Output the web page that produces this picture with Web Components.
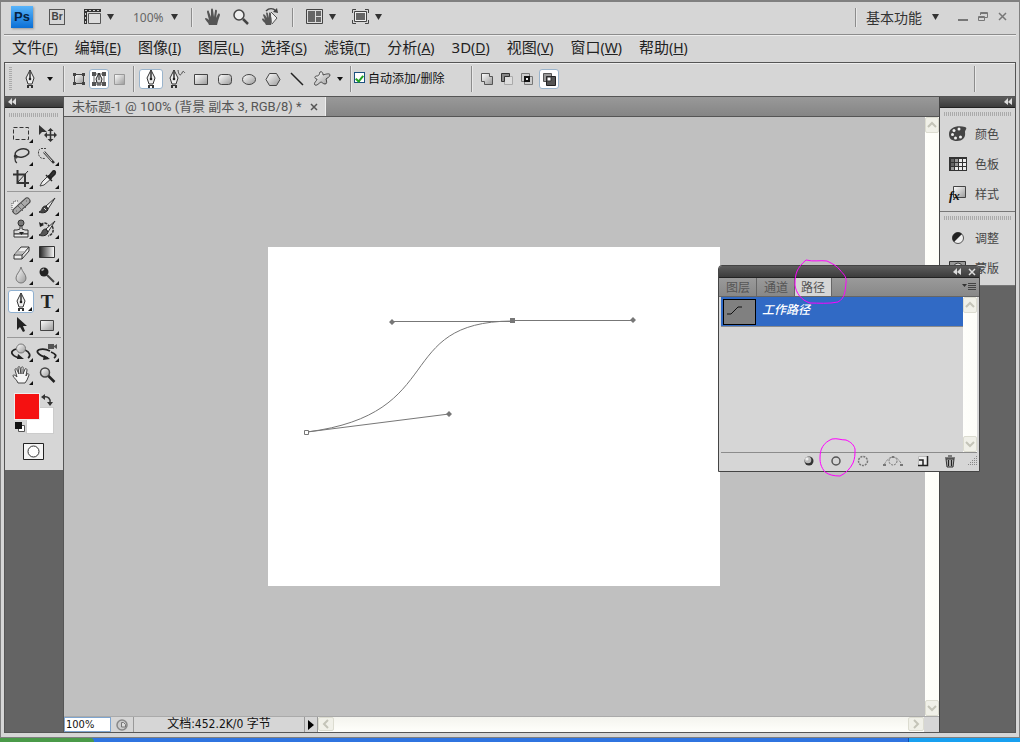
<!DOCTYPE html>
<html lang="zh-CN">
<head>
<meta charset="utf-8">
<title>未标题-1</title>
<style>
  body {
    margin: 0;
    font-family: "Noto Sans", "Noto Sans CJK SC", sans-serif;
    font-size: 12px;
    color: #333;
  }
</style>
</head>
<body>
<ps-window>
  <app-bar slot="top"></app-bar>
  <menu-bar slot="top">
    <menu-item key="F">文件</menu-item>
    <menu-item key="E">编辑</menu-item>
    <menu-item key="I">图像</menu-item>
    <menu-item key="L">图层</menu-item>
    <menu-item key="S">选择</menu-item>
    <menu-item key="T">滤镜</menu-item>
    <menu-item key="A">分析</menu-item>
    <menu-item key="D">3D</menu-item>
    <menu-item key="V">视图</menu-item>
    <menu-item key="W">窗口</menu-item>
    <menu-item key="H">帮助</menu-item>
  </menu-bar>
  <options-bar slot="top"></options-bar>
  <tool-box></tool-box>
  <doc-window></doc-window>
  <side-dock>
    <dock-group>
      <dock-item icon="palette">颜色</dock-item>
      <dock-item icon="swatches">色板</dock-item>
      <dock-item icon="styles">样式</dock-item>
    </dock-group>
    <dock-group>
      <dock-item icon="adjust">调整</dock-item>
      <dock-item icon="mask">蒙版</dock-item>
    </dock-group>
  </side-dock>
  <paths-panel slot="float"></paths-panel>
</ps-window>

<script>
// name: [width, height, svg markup]
const pen = `<path d="M10 1v9M10 1 6 9l2 6h4l2-6z" fill="#eee" stroke="#333"/><path d="M10 3v6" stroke="#333"/><circle cx="10" cy="10" r="1.3" fill="#222"/><path d="M7 16h6v3h-2v-2H9v2H7z" fill="#333"/>`;
const ICONS = {
  film: [20, 18, `<path d="M1 1h17v3H4v12H1z" fill="#333"/><path d="M2 2.500h15M2.500 5v11" stroke="#ccc" stroke-dasharray="2 2"/><path d="M5.500 5.500h12v10h-12z" fill="#ddd" stroke="#555"/>`],
  handsolid: [18, 18, `<path d="M5 17c-1-3-3-4-4-6 0-2 2-1 4 1L3 4c0-2 2-2 2 0l2 5V2c0-2 2-2 2 0l1 7 1-6c0-2 2-1 2 0l-1 7 2-4c1-1 2 0 2 1l-2 6-1 4z" fill="#555"/>`],
  lens: [18, 18, `<circle cx="7" cy="7" r="5" fill="#eee" stroke="#444" stroke-width="1.500"/><path d="m11 11 5 5" stroke="#444" stroke-width="2.500"/>`],
  rotate: [20, 20, `<path d="M6 18c-1-3-4-4-4-6 1-1 2 0 3 1L3 8c0-1 1-1 2 0l2 3-1-5c1-1 2 0 2 1l1 4V6c1-1 2 0 2 1v4l2-3c1 0 1 1 1 2l-2 5-1 3z" fill="#555"/><path d="m11 5 6 6-5 6" fill="#eee" stroke="#555"/><path d="M6 4c3-3 7-3 10 0" fill="none" stroke="#444" stroke-width="1.500"/><path d="m17 1 1 5-5-1z" fill="#444"/>`],
  layout: [20, 18, `<path d="M1.500 1.500h16v14h-16z" fill="#ddd" stroke="#444"/><path d="M3 3h7v11H3zM11 3h5v5h-5zM11 9h5v5h-5z" fill="#666"/>`],
  screen: [20, 18, `<path d="M1.500 5V1.500H5M14 1.500h3.500V5M17.500 12v3.500H14M5 15.500H1.500V12" fill="none" stroke="#444"/><path d="M3.500 3.500h12v10h-12z" fill="#eee" stroke="#444"/><path d="M5 5h9v7H5z" fill="#666"/>`],
  min: [12, 12, `<path d="M1 9h10" stroke="#777" stroke-width="2"/>`],
  restore: [12, 12, `<path d="M3.500 4V1.500h7v5H8M3 2.500h8" fill="none" stroke="#777"/><path d="M1.500 5.500h6v4h-6zM1 6.500h7" fill="none" stroke="#777"/>`],
  close: [12, 12, `<path d="m2 2 7 7M9 2 2 9" stroke="#777" stroke-width="1.500"/>`],
  x: [8, 8, `<path d="m1 1 6 6M7 1 1 7" stroke="currentColor" stroke-width="1.500"/>`],
  down: [8, 6, `<path d="M0 0h7L3.500 6z" fill="#333"/>`],
  downsmall: [6, 4, `<path d="M0 0h6L3 4z" fill="#111"/>`],
  collapse: [8, 8, `<path d="M4 0v7L0 4zM8 0v7L4 4z" fill="#ddd"/>`],
  pen: [20, 20, pen],
  freepen: [17, 20, `<g transform="translate(-5 0)">${pen}</g><path d="M9 1c1 7 3 5 4 3 1-3 2-1 3 0" fill="none" stroke="#444"/>`],
  shapelayer: [16, 16, `<path d="M3.500 3.500h9v9h-9z" fill="url(#g)" stroke="#444"/><path d="M2 2h3v3H2zM11 2h3v3h-3zM2 11h3v3H2zM11 11h3v3h-3z" fill="#444"/>`],
  pathmode: [16, 16, `<path d="M3 3h10v10H3z" fill="none" stroke="#666"/><path d="M1 1h4v4H1zM11 1h4v4h-4zM1 11h4v4H1zM11 11h4v4h-4z" fill="#555"/><path d="M8 2 5 8l1 4h4l1-4zM8 2v7M6 14h4" fill="#ddd" stroke="#222"/>`],
  fillpx: [16, 16, `<path d="M3.500 3.500h10v10h-10z" fill="url(#g)" stroke="#999"/>`],
  rect: [18, 16, `<path d="M2.500 3.500h13v10h-13z" fill="url(#g)" stroke="#444"/>`],
  rrect: [18, 16, `<rect x="2.500" y="3.500" width="13" height="10" rx="3" fill="url(#g)" stroke="#444"/>`],
  ellipse: [18, 16, `<ellipse cx="9" cy="8.500" rx="6.500" ry="5" fill="url(#g)" stroke="#444"/>`],
  polygon: [18, 16, `<path d="M5.500 2.500h7l3.500 6-3.500 6h-7L2 8.500z" fill="url(#g)" stroke="#444"/>`],
  line: [18, 16, `<path d="m3 2 12 12" stroke="#222" stroke-width="1.500"/>`],
  blob: [19, 18, `<path d="M8 2c2-1 3 1 3 3 3-1 7-2 7 0s-3 3-4 4c1 3 1 5-1 5s-3-2-4-2c-2 1-4 4-6 3-2-2 2-4 2-6-2 0-3-2-1-3 2 0 3 0 4-4z" fill="url(#g)" stroke="#444"/>`],
  add: [16, 16, `<path d="M2.500 2.500h8v3h3v8h-8v-3h-3z" fill="url(#g)" stroke="#555"/>`],
  sub: [16, 16, `<path d="M5.500 5.500h8v8h-8z" fill="#ddd" stroke="#aaa"/><path d="M2.500 2.500h8v3h-5v5h-3z" fill="#888" stroke="#333"/>`],
  inter: [16, 16, `<path d="M2.500 2.500h8v8h-8zM5.500 5.500h8v8h-8z" fill="#ccc" stroke="#777"/><path d="M6 6h4v4H6z" fill="#eee" stroke="#111" stroke-width="2"/>`],
  excl: [16, 16, `<path d="M2.500 2.500h8v8h-8z" fill="#999" stroke="#555"/><path d="M5.500 5.500h9v9h-9z" fill="#555" stroke="#222"/><path d="M6 6h4v4H6z" fill="#fff" stroke="#333"/>`],
  marquee: [20, 20, `<path d="M2.500 4.500h15v12h-15z" fill="none" stroke="#333" stroke-dasharray="4 2"/>`],
  move: [22, 20, `<path d="m3 2 8 7H6l-3 3z" fill="#333"/><path d="M14.500 7v10M9.500 12h10" stroke="#333" stroke-width="1.500"/><path d="m14.500 5 3 3h-6zM14.500 19l3-3h-6zM8 12l3-3v6zM21 12l-3-3v6z" fill="#333"/>`],
  lasso: [20, 20, `<ellipse cx="11" cy="7" rx="7" ry="4" transform="rotate(-12 11 7)" fill="none" stroke="#333" stroke-width="1.500"/><path d="M4 9c-2 2 2 4 2 2s-3-1-2 2c0 2 0 3 2 4" fill="none" stroke="#333" stroke-width="1.300"/>`],
  wand: [20, 20, `<path d="M9 2.500H4c-3 1-3 5-2 7 1 3 4 3 6 3" fill="none" stroke="#444" stroke-dasharray="2 1"/><path d="m7 6 10 11" stroke="#333" stroke-width="2.500"/><path d="m7 6 8 9" stroke="#ddd"/>`],
  crop: [20, 20, `<path d="M6.500 1v13H18M2 5.500h12V18" fill="none" stroke="#333" stroke-width="2"/><path d="M17 2 7 13" stroke="#333"/>`],
  dropper: [20, 20, `<path d="m3 17 2-4 7-7 3 3-8 7z" fill="#eee" stroke="#444"/><path d="m9 6 6 6M12 7l4-5c2-1 3 1 2 3l-4 4z" fill="#333" stroke="#222" stroke-width="1.500"/>`],
  heal: [22, 20, `<path d="M8 5H4v2H2v8l4 2" fill="#eee" stroke="#555" stroke-dasharray="1 1"/><path d="M6 15 17 5" stroke="#444" stroke-width="7" stroke-linecap="round"/><path d="M6 15 17 5" stroke="#aaa" stroke-width="5" stroke-linecap="round"/><path d="m8 10 5 5M11 7l5 5M6 15h1M16 5h1" stroke="#666"/>`],
  brush: [20, 20, `<path d="M18 2 9 10l2 3z" fill="#eee" stroke="#333"/><path d="M9 10c-5 0-3 5-7 6 4 2 9 0 9-3z" fill="#444" stroke="#222"/><path d="m7 12 2 2" stroke="#ddd"/>`],
  stamp: [20, 20, `<circle cx="10" cy="4" r="3" fill="#777" stroke="#333"/><path d="M9 7h2v3l3 1h3v4H3v-4h3l3-1z" fill="#ddd" stroke="#333"/><path d="M3 15h14v3H3z" fill="#eee" stroke="#333"/><path d="M8 13h5l-2.500 3z" fill="#222"/>`],
  history: [20, 20, `<path d="M18 2 9 10l2 3z" fill="#eee" stroke="#333"/><path d="M9 10c-5 0-3 5-7 6 4 2 9 0 9-3z" fill="#555" stroke="#222"/><path d="M4 6c3-4 7-1 8 1M15 7c3 5 0 9-4 10" fill="none" stroke="#333" stroke-width="1.500" stroke-dasharray="3 1"/><path d="m2 3 1 5 4-2z" fill="#222"/>`],
  eraser: [20, 20, `<path d="m3 13 7-8h8l-7 8zM3 13v4h8v-4M18 5v4l-7 8" fill="#eee" stroke="#333" stroke-linejoin="round"/><path d="m4 12 3-3h7l-3 3z" fill="#bbb"/>`],
  gradient: [20, 20, `<path d="M2.500 4.500h15v11h-15z" fill="url(#h)" stroke="#333"/>`],
  drop: [20, 20, `<path d="M10 2c1 5 5 7 5 11a5 5 0 0 1-10 0c0-4 4-6 5-11z" fill="url(#g)" stroke="#777"/>`],
  dodge: [20, 20, `<circle cx="7" cy="7" r="4.500" fill="#222"/><path d="M4.500 5.500 7 4" stroke="#aaa" stroke-width="1.500"/><path d="m10 10 7 7" stroke="#444" stroke-width="2"/>`],
  select: [20, 20, `<path d="M6 2v13l3-3 3 5 2-1-2-5h4z" fill="#222"/>`],
  orbit: [22, 20, `<path d="M6 7c-6 2-6 6 3 9M15 8c5 2 6 6 3 8" fill="none" stroke="#222" stroke-width="1.800"/><circle cx="11" cy="6.500" r="4.500" fill="url(#g)" stroke="#777"/><path d="m8 12 6 5H7z" fill="#222"/>`],
  orbitcam: [22, 20, `<path d="M14 9C8 6-1 7 2 11c2 3 6 4 10 5M15 10c5 2 6 4 3 6" fill="none" stroke="#222" stroke-width="1.800"/><path d="m8 13 6 4-7 1z" fill="#222"/><path d="M12 2h6v5h-6zM18 4l3-2v5l-3-2z" fill="#555"/>`],
  hand: [20, 20, `<path d="M7 18c-1-3-4-5-5-7 0-2 2-1 4 1L4 5c0-2 2-2 2 0l2 4-1-6c0-2 2-2 2 0l1 6V3c1-2 3-1 2 1v5l2-5c1-1 2 0 2 1l-1 6 1-2c1-1 2 0 2 1l-2 5-2 3z" fill="#f5f5f5" stroke="#444"/>`],
  zoom: [20, 20, `<circle cx="8" cy="7.500" r="4.500" fill="url(#g)" stroke="#444" stroke-width="1.500"/><path d="m11.500 11 6 6" stroke="#222" stroke-width="2.500"/>`],
  swap: [14, 12, `<path d="M4 3c4-1 7 2 6 6" fill="none" stroke="#333" stroke-width="1.500"/><path d="m5 0-4 3 4 3zM7 8h6l-3 4z" fill="#333"/>`],
  defaults: [12, 12, `<path d="M4.500 4.500h6v6h-6z" fill="#fff" stroke="#555"/><path d="M1 1h7v7H1z" fill="#111"/>`],
  quickmask: [22, 18, `<path d="M.500.500h20v16H.500z" fill="#f5f5f5" stroke="#222"/><circle cx="10.500" cy="8.500" r="5.500" fill="#fff" stroke="#333"/>`],
  palette: [20, 18, `<path d="M1 9c0-7 9-9 16-7 3 1 0 3 0 5 1 6-3 9-8 9s-8-2-8-7z" fill="#444"/><g fill="#eee"><circle cx="6" cy="5.500" r="1.500"/><circle cx="11" cy="4" r="1.500"/><circle cx="4.500" cy="9.500" r="1.500"/><circle cx="7.500" cy="13" r="1.500"/><circle cx="12.500" cy="12" r="1.500"/></g>`],
  swatches: [20, 18, `<path d="M1 2h18v14H1z" fill="#333"/><path d="M3 4h3v3H3zM3 8h3v3H3z" fill="#666"/><path d="M7 4h3v3H7zM7 8h3v3H7zM3 12h3v3H3z" fill="#999"/><path d="M11 4h3v3h-3zM11 8h3v3h-3zM15 4h3v3h-3zM15 8h3v3h-3zM7 12h3v3H7zM11 12h3v3h-3zM15 12h3v3h-3z" fill="#eee"/>`],
  styles: [20, 18, `<path d="M5.500 1.500h12v11h-12z" fill="url(#g)" stroke="#444"/><text x="1" y="15" font-family="Liberation Serif" font-style="italic" font-weight="700" font-size="13" fill="#111">fx</text>`],
  adjust: [20, 18, `<circle cx="10" cy="9" r="5.500" fill="#eee" stroke="#555"/><path d="M6 13a5.500 5.500 0 0 1 8-8z" fill="#222"/>`],
  mask: [20, 18, `<path d="M1.500 2.500h16v11h-16z" fill="#999" stroke="#333"/><circle cx="10" cy="8" r="4" fill="#ddd" stroke="#444"/>`],
  up: [12, 12, `<path d="m2 8 4-4 4 4" fill="none" stroke="#c4c4b8" stroke-width="2"/>`],
  dn: [12, 12, `<path d="m2 4 4 4 4-4" fill="none" stroke="#c4c4b8" stroke-width="2"/>`],
  lt: [12, 12, `<path d="M8 2 4 6l4 4" fill="none" stroke="#c4c4b8" stroke-width="2"/>`],
  rt: [12, 12, `<path d="m4 2 4 4-4 4" fill="none" stroke="#c4c4b8" stroke-width="2"/>`],
  play: [6, 10, `<path d="M0 0v10l6-5z" fill="#000"/>`],
  clock: [14, 14, `<circle cx="7" cy="7" r="5" fill="#ccc" stroke="#888" stroke-width="1.500"/><path d="M6.500 9V4.500h2l2 2V9z" fill="#ddd" stroke="#777"/>`],
  panelmenu: [14, 10, `<path d="M0 2h5L2.500 5z" fill="#333"/><path d="M6 1.500h8M6 3.500h8M6 5.500h8M6 7.500h8" stroke="#444"/>`],
  fillpath: [14, 14, `<circle cx="7" cy="7" r="4.500" fill="#333"/><circle cx="6" cy="6" r="3.300" fill="#bbb"/><circle cx="5" cy="5" r="1.500" fill="#eee"/>`],
  strokepath: [14, 14, `<circle cx="7" cy="7" r="4" fill="none" stroke="#555" stroke-width="1.500"/>`],
  loadsel: [14, 14, `<circle cx="7" cy="7" r="4.500" fill="none" stroke="#777" stroke-width="1.500" stroke-dasharray="2 1"/>`],
  workpath: [20, 14, `<circle cx="10" cy="7" r="4" fill="none" stroke="#777" stroke-dasharray="2 1"/><path d="M1 11c2-4 5-8 9-8s7 4 9 8" fill="none" stroke="#888" stroke-dasharray="3 1"/><path d="M0 10h3v2H0zM17 10h3v2h-3zM9 2h2v2H9z" fill="#777"/>`],
  newpath: [14, 14, `<path d="M2.500 2.500h9v9h-9z" fill="#eee" stroke="#bbb"/><path d="M11.500 2v9.500H2" stroke="#222" stroke-width="1.500"/><path d="M3 6h4v5" stroke="#222" stroke-width="1.500"/>`],
  trash: [14, 14, `<path d="M3 5h8l-1 8H4z" fill="#aaa" stroke="#333"/><path d="M2 4h10M5 2h4M5.500 6v6M8.500 6v6" stroke="#222"/>`],
  resize: [12, 12, `<path d="M10.500 1v10M8.500 3v8M6.500 5v6M4.500 7v4M2.500 9v2" stroke="#888" stroke-dasharray="1 1"/>`],
};

// Fills the shadow root with the element's styles and markup
class PsElement extends HTMLElement {
  connectedCallback() {
    if (this.shadowRoot) return;
    this.attachShadow({ mode: "open" });
    this.shadowRoot.innerHTML = `
      <style>
        * { box-sizing: border-box; }
        button { all: unset; box-sizing: border-box; display: flex; align-items: center; justify-content: center; flex: none; }
        .sep { width: 1px; background: #8c8c8c; box-shadow: 1px 0 #e8e8e8; flex: none; }
        .grip { height: 4px; background: repeating-linear-gradient(90deg, #aaa 0 1px, #d6d6d6 1px 2px); flex: none; }
        .dark { display: flex; align-items: center; height: 11px; padding: 0 3px; background: linear-gradient(#5c5c5c, #3c3c3c); border-bottom: 1px solid #222; flex: none; }
        .grow { flex: 1; }
      </style>${this.render()}`;
  }
}

const icons = (names) => names.map((n) => `<button aria-label="${n}"><ps-icon name="${n}"></ps-icon></button>`).join("");

customElements.define("ps-icon", class extends PsElement {
  render() {
    const [w, h, body] = ICONS[this.getAttribute("name")];
    return `
      <style>:host { display: block; flex: none; } svg { display: block; }</style>
      <svg width="${w}" height="${h}" viewBox="0 0 ${w} ${h}" fill="none" aria-hidden="true">
        <defs>
          <linearGradient id="g" x2="1" y2="1"><stop stop-color="#fff"/><stop offset="1" stop-color="#999"/></linearGradient>
          <linearGradient id="h"><stop stop-color="#222"/><stop offset="1" stop-color="#fff"/></linearGradient>
        </defs>
        ${body}
      </svg>`;
  }
});

customElements.define("ps-window", class extends PsElement {
  render() {
    return `
      <style>
        :host { display: flex; flex-direction: column; min-height: 100vh; position: relative; overflow: hidden; box-sizing: border-box; }
        .frame { flex: 1; display: flex; flex-direction: column; background: #d6d6d6; border: 1px solid #808080; border-top-width: 2px; padding: 0 3px 4px; }
        .work { flex: 1; display: flex; border: 1px solid #555; border-top: 0; }
        .task { height: 4px; display: flex; background: #2f74e0; }
        .start { width: 94px; background: #4a9a48; border-radius: 0 4px 0 0; }
        .tray { width: 112px; margin-left: auto; background: #18a0f0; border-left: 1px solid #1050b0; }
      </style>
      <div class="frame">
        <slot name="top"></slot>
        <div class="work"><slot></slot></div>
      </div>
      <div class="task"><div class="start"></div><div class="tray"></div></div>
      <slot name="float"></slot>`;
  }
});

customElements.define("app-bar", class extends PsElement {
  render() {
    return `
      <style>
        :host { display: flex; align-items: center; height: 33px; padding: 0 7px 2px; border-bottom: 1px solid #8c8c8c; box-sizing: border-box; flex: none; }
        .logo { width: 22px; height: 22px; background: linear-gradient(#58b4fa, #0a6fd6); color: #06213f; font: bold 13px/22px "Liberation Sans", sans-serif; text-align: center; box-shadow: 1px 1px 2px #999; }
        .br { width: 16px; height: 16px; margin: 0 18px 0 16px; border: 1px solid #555; font: bold 10px/14px "Liberation Sans", sans-serif; color: #444; }
        button { gap: 4px; }
        .tall { height: 19px; margin: 0 12px; }
        .zoom { margin-left: 18px; color: #666; gap: 7px; }
        .screens { margin-left: 14px; }
        .hands { display: flex; align-items: center; gap: 10px; }
        .mode { font-size: 14px; gap: 10px; color: #333; margin: 0 17px 0 10px; }
        .win { display: flex; gap: 8px; }
        .right { height: 19px; }
      </style>
      <div class="logo">Ps</div>
      <button class="br">Br</button>
      <button aria-label="查看额外内容"><ps-icon name="film"></ps-icon><ps-icon name="down"></ps-icon></button>
      <button class="zoom">100%<ps-icon name="down"></ps-icon></button>
      <div class="sep tall"></div>
      <div class="hands">${icons(["handsolid", "lens", "rotate"])}</div>
      <div class="sep tall"></div>
      <button aria-label="排列文档"><ps-icon name="layout"></ps-icon><ps-icon name="down"></ps-icon></button>
      <button class="screens" aria-label="屏幕模式"><ps-icon name="screen"></ps-icon><ps-icon name="down"></ps-icon></button>
      <div class="grow"></div>
      <div class="sep right"></div>
      <button class="mode">基本功能<ps-icon name="down"></ps-icon></button>
      <div class="win">${icons(["min", "restore", "close"])}</div>`;
  }
});

customElements.define("menu-bar", class extends PsElement {
  render() {
    return `
      <style>:host { display: flex; align-items: center; gap: 17px; height: 27px; padding: 0 8px 4px; box-sizing: border-box; border-top: 1px solid #eee; flex: none; }</style>
      <slot></slot>`;
  }
});

customElements.define("menu-item", class extends PsElement {
  render() {
    return `
      <style>
        :host { display: block; }
        button { display: block; font-size: 15px; line-height: 22px; color: #222; white-space: nowrap; }
        span { font-size: 14px; }
      </style>
      <button><slot></slot><span>(<u>${this.getAttribute("key")}</u>)</span></button>`;
  }
});

customElements.define("options-bar", class extends PsElement {
  render() {
    return `
      <style>
        :host { display: flex; align-items: center; height: 35px; box-sizing: border-box; border: 1px solid #555; box-shadow: inset 0 1px #eee; padding: 0 4px 2px; flex: none; }
        .vgrip { width: 3px; height: 24px; background: repeating-linear-gradient(#aaa 0 1px, #d6d6d6 1px 2px); }
        .sep { height: 26px; }
        .cur { gap: 7px; margin: 0 10px 0 8px; }
        .modes { display: flex; align-items: center; gap: 2px; margin: 0 6px 0 7px; }
        .shapes { display: flex; align-items: center; gap: 6px; margin: 0 7px 0 5px; }
        .ops { display: flex; align-items: center; gap: 4px; margin-left: 7px; }
        .on { background: #fff; border: 1px solid #9ab4cc; border-radius: 3px; height: 20px; padding: 0 1px; }
        label { display: flex; align-items: center; gap: 3px; margin: 0 27px 2px 3px; color: #111; font-size: 12px; white-space: nowrap; }
        input { appearance: none; width: 11px; height: 11px; margin: 0; border: 1px solid #1c5180; background: #fff; display: grid; place-items: center; }
        input:checked::before { content: ""; width: 3px; height: 6px; border: solid #21a121; border-width: 0 2px 2px 0; transform: rotate(40deg); }
        .end { margin-right: 36px; }
      </style>
      <div class="vgrip"></div>
      <button class="cur" aria-label="钢笔工具"><ps-icon name="pen"></ps-icon><ps-icon name="downsmall"></ps-icon></button>
      <div class="sep"></div>
      <div class="modes">${icons(["shapelayer"])}<button class="on" aria-label="路径"><ps-icon name="pathmode"></ps-icon></button>${icons(["fillpx"])}</div>
      <div class="sep"></div>
      <div class="shapes"><button class="on" aria-label="钢笔"><ps-icon name="pen"></ps-icon></button>${icons(["freepen", "rect", "rrect", "ellipse", "polygon", "line", "blob", "downsmall"])}</div>
      <div class="sep"></div>
      <label><input type="checkbox" checked>自动添加/删除</label>
      <div class="sep"></div>
      <div class="ops">${icons(["add", "sub", "inter"])}<button class="on" aria-label="重叠"><ps-icon name="excl"></ps-icon></button></div>
      <div class="grow"></div>
      <div class="sep end"></div>`;
  }
});

customElements.define("tool-box", class extends PsElement {
  tools(names) {
    return `<div class="group">${names.map((n) => `
      <button class="${n === "pen" ? "on" : ""} ${n === "move" || n === "zoom" ? "" : "more"}" aria-label="${n}">
        ${n === "type" ? `<span class="type">T</span>` : `<ps-icon name="${n}"></ps-icon>`}
      </button>`).join("")}</div>`;
  }
  render() {
    return `
      <style>
        :host { display: flex; flex-direction: column; width: 59px; box-sizing: border-box; background: #646464; border-right: 1px solid #555; flex: none; }
        .box { background: #d6d6d6; padding: 5px 2px 9px; }
        .grip { margin: 0 2px 2px; }
        .group { display: grid; grid-template-columns: 26px 26px; grid-auto-rows: 23px; padding: 2px 0 1px 1px; border-bottom: 1px solid #999; }
        .group:nth-of-type(5) { border: 0; }
        .group button { position: relative; }
        .more::after { content: ""; position: absolute; right: 1px; bottom: 1px; border: 2px solid #111; border-top-color: transparent; border-left-color: transparent; }
        .on { background: #fff; border: 1px solid #8fb0d0; border-radius: 3px; }
        .type { font: bold 19px/22px "Liberation Serif", serif; color: #222; }
        .colors { display: grid; grid-template-columns: 12px 14px 14px; grid-template-rows: 14px 13px 14px; margin: 6px 1px 9px 0; justify-content: center; }
        .fg { grid-area: 1 / 1 / 3 / 3; background: #f51111; border: 1px solid #eee; z-index: 1; }
        .bg { grid-area: 2 / 2 / 4 / 4; background: #fff; border: 1px solid #ccc; }
        .swap { grid-area: 1 / 3; }
        .def { grid-area: 3 / 1; justify-self: start; }
        .mask { margin: 0 auto; width: 22px; }
      </style>
      <div class="dark"><ps-icon name="collapse"></ps-icon></div>
      <div class="box">
        <div class="grip"></div>
        ${this.tools(["marquee", "move", "lasso", "wand", "crop", "dropper"])}
        ${this.tools(["heal", "brush", "stamp", "history", "eraser", "gradient", "drop", "dodge"])}
        ${this.tools(["pen", "type", "select", "rect"])}
        ${this.tools(["orbit", "orbitcam", "hand", "zoom"])}
        <div class="colors">
          <button class="fg" aria-label="前景色"></button>
          <button class="bg" aria-label="背景色"></button>
          <button class="swap" aria-label="切换颜色"><ps-icon name="swap"></ps-icon></button>
          <button class="def" aria-label="默认颜色"><ps-icon name="defaults"></ps-icon></button>
        </div>
        <button class="mask" aria-label="快速蒙版"><ps-icon name="quickmask"></ps-icon></button>
      </div>`;
  }
});

customElements.define("scroll-bar", class extends PsElement {
  render() {
    const side = this.getAttribute("dir") === "side";
    return `
      <style>
        :host { display: flex; flex-direction: ${side ? "row" : "column"}; justify-content: space-between; background: linear-gradient(${side ? "0deg" : "90deg"}, #fffffb, ${side ? "#f4f4ee" : "#fdfdf8"}); }
        button { width: ${side ? 16 : 14}px; height: ${side ? 14 : 16}px; background: #f0f0e8; border: 1px solid #dcdcd0; border-radius: 2px; }
      </style>
      ${icons(side ? ["lt", "rt"] : ["up", "dn"])}`;
  }
});

customElements.define("doc-window", class extends PsElement {
  render() {
    return `
      <style>
        :host { flex: 1; display: flex; flex-direction: column; min-width: 0; }
        .tabs { display: flex; height: 20px; background: linear-gradient(#999, #858585); border-bottom: 1px solid #555; }
        .tab { display: flex; align-items: center; gap: 8px; padding: 0 7px 0 8px; background: #d6d6d6; color: #555; font-family: Roboto, "Noto Sans CJK SC", sans-serif; font-size: 13px; line-height: 18px; white-space: nowrap; border-right: 1px solid #eee; }
        .view { flex: 1; display: flex; }
        .canvas { flex: 1; display: flex; align-items: center; justify-content: center; padding-right: 1px; background: #c0c0c0; }
        .page { display: block; background: #fff; }
        .status { display: flex; height: 16px; border-top: 1px solid #aaa; color: #111; font-family: "DejaVu Sans Condensed", "Noto Sans CJK SC", sans-serif; font-size: 11px; }
        .pct { width: 47px; border: 1px solid #7fa5cf; background: #fff; margin: 0; padding: 0 1px; font: inherit; color: #111; }
        .ver, .play { width: 23px; border-right: 1px solid #999; }
        .play { width: 13px; }
        .info { width: 171px; text-align: center; font-size: 12px; line-height: 15px; border-right: 1px solid #999; white-space: nowrap; }
        .status scroll-bar { flex: 1; }
        .corner { width: 15px; background: #d6d6d6; }
      </style>
      <div class="tabs"><div class="tab">未标题-1 @ 100% (背景 副本 3, RGB/8) *<button aria-label="关闭"><ps-icon name="x"></ps-icon></button></div></div>
      <div class="view">
        <div class="canvas">
          <svg class="page" width="452" height="339" viewBox="0 0 452 339" fill="none" stroke="#777">
            <path d="M39 185C181 167 124 75 244 74"/>
            <path d="m39 185 142-18M124 74.500h120M244 73.500h121"/>
            <path d="M36.500 183.500h4v4h-4z" fill="#fff"/>
            <path d="M242 71h5v5h-5zM124 72l3 3-3 3-3-3zM181 164l3 3-3 3-3-3zM365 70l3 3-3 3-3-3z" fill="#777" stroke="none"/>
          </svg>
        </div>
        <scroll-bar></scroll-bar>
      </div>
      <div class="status">
        <input class="pct" value="100%" aria-label="缩放">
        <button class="ver" aria-label="版本"><ps-icon name="clock"></ps-icon></button>
        <div class="info">文档:452.2K/0 字节</div>
        <button class="play" aria-label="更多"><ps-icon name="play"></ps-icon></button>
        <scroll-bar dir="side"></scroll-bar>
        <div class="corner"></div>
      </div>`;
  }
});

customElements.define("side-dock", class extends PsElement {
  render() {
    return `
      <style>
        :host { display: flex; flex-direction: column; width: 76px; box-sizing: border-box; background: #646464; border-left: 1px solid #444; flex: none; }
        .dark { justify-content: flex-end; }
      </style>
      <div class="dark"><ps-icon name="collapse"></ps-icon></div>
      <slot></slot>`;
  }
});

customElements.define("dock-group", class extends PsElement {
  render() {
    return `
      <style>
        :host { display: block; background: #d6d6d6; padding: 4px 4px 2px; border-bottom: 1px solid #777; }
        .grip { margin-bottom: 3px; }
      </style>
      <div class="grip"></div><slot></slot>`;
  }
});

customElements.define("dock-item", class extends PsElement {
  render() {
    return `
      <style>
        :host { display: block; }
        button { width: 100%; height: 30px; justify-content: flex-start; gap: 7px; padding-left: 4px; font-size: 12px; color: #444; }
      </style>
      <button><ps-icon name="${this.getAttribute("icon")}"></ps-icon><slot></slot></button>`;
  }
});

customElements.define("paths-panel", class extends PsElement {
  render() {
    return `
      <style>
        :host { position: absolute; top: 265px; right: 40px; width: 262px; box-sizing: border-box; display: flex; flex-direction: column; background: #d6d6d6; border: 1px solid #444; border-radius: 4px 4px 0 0; }
        .dark { height: 12px; justify-content: flex-end; gap: 7px; color: #ddd; border-radius: 3px 3px 0 0; }
        .tabs { display: flex; align-items: center; height: 19px; background: linear-gradient(#9a9a9a, #888); border-bottom: 1px solid #666; padding-right: 3px; }
        .tabs button { height: 18px; padding: 0 6px 0 7px; color: #555; border-right: 1px solid #666; }
        .tabs .on { background: #d6d6d6; padding: 0 6px; }
        .tabs .menu { margin-left: auto; padding: 0; border: 0; }
        .body { display: flex; height: 156px; margin: 0 2px; border-bottom: 1px solid #8c8c8c; }
        .list { flex: 1; }
        .row { display: flex; gap: 6px; height: 30px; background: #316ac5; color: #fff; padding: 2px; border-bottom: 1px solid #8c8c8c; line-height: 22px; }
        .row svg { display: block; background: #808080; border: 1px solid #000; }
        .name { font-style: italic; font-weight: 500; }
        .foot { display: flex; align-items: center; justify-content: flex-end; gap: 13px; height: 18px; padding: 0 1px 2px; }
        .foot button:last-child { margin-left: -4px; }
        .marks { position: absolute; left: 70px; top: -10px; pointer-events: none; }
      </style>
      <div class="dark"><ps-icon name="collapse"></ps-icon><ps-icon name="x"></ps-icon></div>
      <div class="tabs"><button>图层</button><button>通道</button><button class="on">路径</button><button class="menu" aria-label="面板菜单"><ps-icon name="panelmenu"></ps-icon></button></div>
      <div class="body">
        <div class="list">
          <div class="row">
            <svg width="33" height="26" viewBox="0 0 31 24" fill="none"><path d="M3 14h4l7-7h4" stroke="#111"/></svg>
            <span class="name">工作路径</span>
          </div>
        </div>
        <scroll-bar></scroll-bar>
      </div>
      <div class="foot">${icons(["fillpath", "strokepath", "loadsel", "workpath", "newpath", "trash", "resize"])}</div>
      <svg class="marks" width="80" height="230" viewBox="71 -9 80 230" fill="none" stroke="#f0f">
        <path d="M88-5c8 2 14 0 21 1 6 3 10 5 13 9s7 6 6 13c-1 9-1 15-8 19-9 2-20 1-28 1-9-3-14-10-15-18 0-12 2-17 11-25"/>
        <path d="M114 174c6-1 8 1 14 1 5 2 8 5 9 9 0 6 0 9-2 14-3 6-7 10-13 13-6 0-11-1-15-4-4-5-5-9-5-14 0-9 3-15 12-19"/>
      </svg>`;
  }
});
</script>
</body>
</html>
